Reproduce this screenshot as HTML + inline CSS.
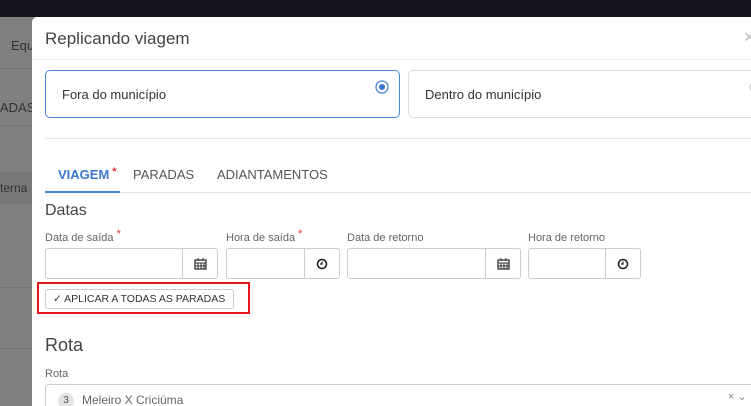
<!DOCTYPE html>
<html style="overflow:hidden;width:751px;height:406px"><head><meta charset="utf-8"><style>
*{box-sizing:border-box;margin:0;padding:0}
body{width:751px;height:406px;overflow:hidden;position:relative;background:#7f7f7f;font-family:"Liberation Sans",sans-serif;color:#555}
.top{position:absolute;left:0;top:0;width:751px;height:17px;background:#13131b}
.bg{position:absolute;color:#333;font-size:13px}
.hl{position:absolute;left:0;width:32px;height:1px;background:#737373}
.modal{position:absolute;left:32px;top:17px;width:719px;height:389px;background:#fff;border-radius:5px 0 0 0;overflow:hidden}
.a{position:absolute}
.title{left:13px;top:12px;font-size:17px;color:#444}
.card{position:absolute;top:53px;height:48px;border:1px solid #ddd;border-radius:5px;font-size:13px;color:#333;padding:16px 16px}
.lbl{position:absolute;top:215px;font-size:11px;color:#666}
.star{color:#e33;font-size:11px;position:relative;top:-4px}
.inp{position:absolute;top:231px;height:31px;border:1px solid #ccc;border-radius:3px}
.add{position:absolute;top:0;right:0;width:35px;height:29px;border-left:1px solid #ccc;display:flex;align-items:center;justify-content:center}
</style></head><body>
<div class="top"></div>
<div class="bg" style="left:11px;top:38px">Equ</div>
<div class="hl" style="top:68px"></div>
<div class="bg" style="left:0;top:100px">ADAST</div>
<div class="hl" style="top:125px"></div>
<div style="position:absolute;left:0;top:172px;width:32px;height:32px;background:#777"></div>
<div class="bg" style="left:0;top:181px;font-size:12px">terna</div>
<div class="hl" style="top:287px"></div>
<div class="hl" style="top:348px"></div>
<div class="modal">
 <div class="a title">Replicando viagem</div>
 <div class="a" style="left:0;top:42px;width:740px;height:1px;background:#f0f0f0"></div>
 <div class="card" style="left:13px;width:355px;border-color:#4a86d8">Fora do município
  <svg style="position:absolute;right:10px;top:9px" width="14" height="14"><circle cx="7" cy="7" r="6" fill="none" stroke="#4a86d8" stroke-width="1.3"/><circle cx="7" cy="7" r="3" fill="#3b78d0"/></svg></div>
 <div class="card" style="left:376px;width:360px">Dentro do município
  <svg style="position:absolute;right:4px;top:9px" width="14" height="14"><circle cx="7" cy="7" r="6" fill="none" stroke="#bbb"/></svg></div>
 <div class="a" style="left:13px;top:121px;width:727px;height:1px;background:#e6e6e6"></div>
 <div class="a" style="left:13px;top:175px;width:727px;height:1px;background:#e6e6e6"></div>
 <div class="a" style="left:13px;top:174px;width:75px;height:2px;background:#4a86d8"></div>
 <div class="a" style="left:26px;top:150px;font-size:13px;font-weight:bold;color:#3b78d0">VIAGEM<span class="star" style="margin-left:3px">*</span></div>
 <div class="a" style="left:101px;top:150px;font-size:13px;color:#555">PARADAS</div>
 <div class="a" style="left:185px;top:150px;font-size:13px;color:#555">ADIANTAMENTOS</div>
 <div class="a" style="left:13px;top:185px;font-size:16px;color:#444">Datas</div>
 <div class="lbl" style="left:13px">Data de saída <span class="star">*</span></div>
 <div class="lbl" style="left:194px">Hora de saída <span class="star">*</span></div>
 <div class="lbl" style="left:315px">Data de retorno</div>
 <div class="lbl" style="left:496px">Hora de retorno</div>
 <div class="inp" style="left:13px;width:173px"><div class="add"><svg width="13" height="12"><rect x="1" y="2" width="11" height="9" fill="none" stroke="#333" stroke-width="1.3"/><path d="M1 5H12M4 5V11M7 5V11M10 5V11M1 8H12M4 0V3M9 0V3" stroke="#333" stroke-width="1"/></svg></div></div>
 <div class="inp" style="left:194px;width:114px"><div class="add"><svg width="12" height="12"><circle cx="6" cy="6" r="4.5" fill="none" stroke="#222" stroke-width="1.6"/><path d="M6 3.5V6H4" fill="none" stroke="#222" stroke-width="1.2"/></svg></div></div>
 <div class="inp" style="left:315px;width:174px"><div class="add"><svg width="13" height="12"><rect x="1" y="2" width="11" height="9" fill="none" stroke="#333" stroke-width="1.3"/><path d="M1 5H12M4 5V11M7 5V11M10 5V11M1 8H12M4 0V3M9 0V3" stroke="#333" stroke-width="1"/></svg></div></div>
 <div class="inp" style="left:496px;width:113px"><div class="add"><svg width="12" height="12"><circle cx="6" cy="6" r="4.5" fill="none" stroke="#222" stroke-width="1.6"/><path d="M6 3.5V6H4" fill="none" stroke="#222" stroke-width="1.2"/></svg></div></div>
 <div class="a" style="left:5px;top:265px;width:213px;height:32px;border:2px solid #e8141c"></div>
 <div class="a" style="left:13px;top:272px;width:189px;height:20px;border:1px solid #ccc;border-radius:3px;font-size:10.5px;color:#333;padding:3px 0 0 7px;white-space:nowrap">&#10003; APLICAR A TODAS AS PARADAS</div>
 <div class="a" style="left:13px;top:318px;font-size:18px;color:#444">Rota</div>
 <div class="a" style="left:13px;top:351px;font-size:11px;color:#666">Rota</div>
 <div class="a" style="left:13px;top:367px;width:740px;height:40px;border:1px solid #ccc;border-radius:4px"></div>
 <div class="a" style="left:26px;top:376px;width:16px;height:16px;border-radius:8px;background:#e4e4e4;font-size:10px;text-align:center;line-height:16px;color:#555">3</div>
 <div class="a" style="left:50px;top:376px;font-size:12px;color:#666">Meleiro X Criciúma</div>
 <div class="a" style="left:696px;top:373px;font-size:11px;color:#888">× ⌄</div>
 <div class="a" style="left:712px;top:10px;font-size:18px;color:#bbb">×</div>
</div>
</body></html>
